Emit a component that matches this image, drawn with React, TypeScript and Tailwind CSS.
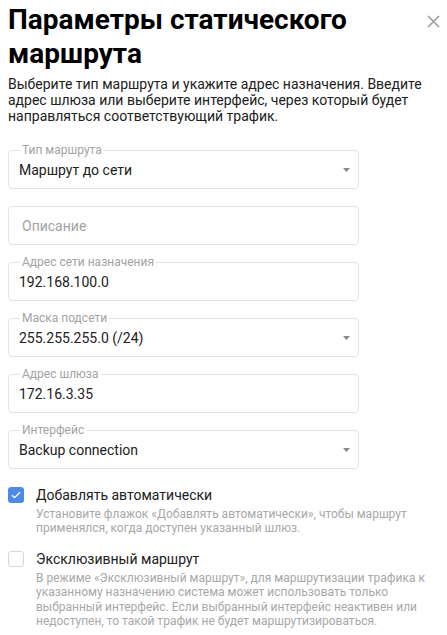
import { useState } from 'react';

type FieldProps = {
  label?: string;
  value?: string;
  placeholder?: string;
  select?: boolean;
};

function Field({ label, value, placeholder, select }: FieldProps) {
  return (
    <div className="relative flex h-[39px] w-[351px] items-center rounded-[4px] border border-[#e3e3e3] pl-[10px] pr-[8px]">
      {label && (
        <span className="absolute -top-[8px] left-[11px] bg-white px-[2px] text-[12px] leading-[14px] text-[#a3a3a3]">
          {label}
        </span>
      )}
      {value ? (
        <span className="flex-1 text-[14px] leading-[18px] text-[#212121]">{value}</span>
      ) : (
        <span className="flex-1 pl-[3px] text-[14px] leading-[18px] text-[#a3a3a3]">{placeholder}</span>
      )}
      {select && (
        <svg width="7" height="4" viewBox="0 0 7 4">
          <path d="M0 0h7L3.5 4z" fill="#8a8a8a" />
        </svg>
      )}
    </div>
  );
}

function Check({ checked, onToggle, label, help }: { checked: boolean; onToggle: () => void; label: string; help: string }) {
  return (
    <div className="flex gap-[12px]">
      <button
        onClick={onToggle}
        className={
          checked
            ? 'mt-[1px] flex h-[16px] w-[16px] shrink-0 items-center justify-center rounded-[3px] bg-[#4d8ae6]'
            : 'mt-[1px] flex h-[16px] w-[16px] shrink-0 items-center justify-center rounded-[3px] border border-[#d6d6d6] bg-white'
        }
      >
        {checked && (
          <svg width="10" height="8" viewBox="0 0 10 8">
            <path d="M1 4.2l2.6 2.5L9 1.2" fill="none" stroke="white" strokeWidth="1.3" />
          </svg>
        )}
      </button>
      <div className="flex flex-col">
        <div className="text-[14px] leading-[18px] text-[#212121]">{label}</div>
        <div className="mt-[3px] text-[12px] leading-[14.4px] text-[#a8a8a8]">{help}</div>
      </div>
    </div>
  );
}

export default function App() {
  const [auto, setAuto] = useState(true);
  const [exclusive, setExclusive] = useState(false);

  return (
    <div className="min-h-screen bg-white px-2 pt-[3px] font-['Roboto',sans-serif]">
      <div className="flex items-start">
        <h1 className="flex-1 text-[28px] font-bold leading-[34px] text-black">
          Параметры статического маршрута
        </h1>
        <button className="-mr-px mt-[12px] text-[#9e9e9e]">
          <svg width="13" height="13" viewBox="0 0 13 13">
            <path d="M1 1l11 11M12 1L1 12" stroke="currentColor" strokeWidth="1.7" />
          </svg>
        </button>
      </div>

      <p className="mt-[5px] pr-[8px] text-[14px] leading-[16px] text-[#212121]">
        Выберите тип маршрута и укажите адрес назначения. Введите адрес шлюза или выберите интерфейс, через который будет
        направляться соответствующий трафик.
      </p>

      <div className="mt-[26px] flex flex-col gap-[17px]">
        <Field label="Тип маршрута" value="Маршрут до сети" select />
        <Field placeholder="Описание" />
        <Field label="Адрес сети назначения" value="192.168.100.0" />
        <Field label="Маска подсети" value="255.255.255.0 (/24)" select />
        <Field label="Адрес шлюза" value="172.16.3.35" />
        <Field label="Интерфейс" value="Backup connection" select />
      </div>

      <div className="mt-[17px] flex flex-col gap-[14px] pr-[8px]">
        <Check
          checked={auto}
          onToggle={() => setAuto(!auto)}
          label="Добавлять автоматически"
          help="Установите флажок «Добавлять автоматически», чтобы маршрут применялся, когда доступен указанный шлюз."
        />
        <Check
          checked={exclusive}
          onToggle={() => setExclusive(!exclusive)}
          label="Эксклюзивный маршрут"
          help="В режиме «Эксклюзивный маршрут», для маршрутизации трафика к указанному назначению система может использовать только выбранный интерфейс. Если выбранный интерфейс неактивен или недоступен, то такой трафик не будет маршрутизироваться."
        />
      </div>
    </div>
  );
}
